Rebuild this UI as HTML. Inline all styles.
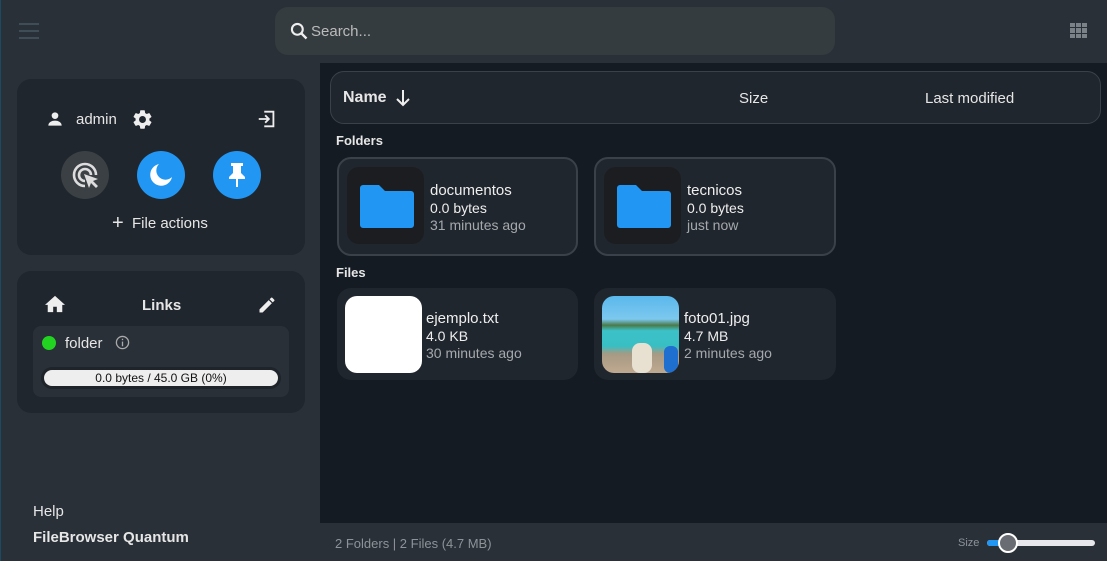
<!DOCTYPE html><html><head><style>
*{box-sizing:border-box;margin:0;padding:0}
body{width:1107px;height:561px;overflow:hidden;background:#293038;font-family:"Liberation Sans",sans-serif;color:#e6e6e6;position:relative}
.a{position:absolute}
.card{position:absolute;background:#20262d;border-radius:14px}
.fc{position:absolute;background:#20262d;border-radius:14px;border:2px solid #3b4148}
.ib{position:absolute;left:8px;top:8px;width:77px;height:77px;background:#1c1d20;border-radius:12px}
.t1{font-size:15px;color:#eee}.t2{font-size:14px;color:#eee}.t3{font-size:14px;color:#a5a9ad}
</style></head><body>
<div class="a" style="left:0;top:0;width:1px;height:561px;background:#1b4a66"></div>
<svg class="a" style="left:19px;top:22px" width="20" height="18"><rect y="1" width="20" height="2" fill="#3f4d57"/><rect y="8" width="20" height="2" fill="#3f4d57"/><rect y="15" width="20" height="2" fill="#3f4d57"/></svg>
<div class="a" style="left:275px;top:7px;width:560px;height:48px;background:#353c3f;border-radius:13px"></div>
<svg class="a" style="left:289px;top:21px" width="20" height="20" viewBox="0 0 24 24"><circle cx="10" cy="10" r="6.5" stroke="#eee" stroke-width="2.5" fill="none"/><path d="M15 15l6 6" stroke="#eee" stroke-width="2.8"/></svg>
<div class="a" style="left:311px;top:23px;font-size:15px;color:#bbb">Search...</div>
<svg class="a" style="left:1070px;top:23px" width="18" height="16"><g fill="#7b8288"><rect width="5" height="4"/><rect x="6" width="5" height="4"/><rect x="12" width="5" height="4"/><rect y="5" width="5" height="5"/><rect x="6" y="5" width="5" height="5"/><rect x="12" y="5" width="5" height="5"/><rect y="11" width="5" height="4"/><rect x="6" y="11" width="5" height="4"/><rect x="12" y="11" width="5" height="4"/></g></svg>

<div class="a" style="left:320px;top:63px;width:787px;height:460px;background:#151b22"></div>
<div class="a" style="left:330px;top:71px;width:771px;height:53px;background:#20262d;border:1px solid #3b4148;border-radius:14px"></div>
<div class="a" style="left:343px;top:89px;font-size:16px;font-weight:bold">Name</div>
<svg class="a" style="left:394px;top:88px" width="18" height="20" viewBox="0 0 18 20"><path d="M9 2v15M3 11l6 6 6-6" stroke="#eee" stroke-width="2" fill="none"/></svg>
<div class="a" style="left:739px;top:90px;font-size:15px">Size</div>
<div class="a" style="left:925px;top:90px;font-size:15px">Last modified</div>

<div class="a" style="left:336px;top:133px;font-size:13px;font-weight:bold">Folders</div>
<div class="a" style="left:336px;top:265px;font-size:13px;font-weight:bold">Files</div>

<div class="fc" style="left:337px;top:157px;width:241px;height:99px"><div class="ib"></div>
<svg class="a" style="left:20px;top:24px" width="56" height="46" viewBox="0 0 56 46"><path d="M4 2h16l6 6h26a3 3 0 013 3v31a3 3 0 01-3 3H4a3 3 0 01-3-3V5a3 3 0 013-3z" fill="#2196f3"/></svg>
<div class="a t1" style="left:91px;top:23px">documentos</div><div class="a t2" style="left:91px;top:41px">0.0 bytes</div><div class="a t3" style="left:91px;top:58px">31 minutes ago</div></div>
<div class="fc" style="left:594px;top:157px;width:242px;height:99px"><div class="ib"></div>
<svg class="a" style="left:20px;top:24px" width="56" height="46" viewBox="0 0 56 46"><path d="M4 2h16l6 6h26a3 3 0 013 3v31a3 3 0 01-3 3H4a3 3 0 01-3-3V5a3 3 0 013-3z" fill="#2196f3"/></svg>
<div class="a t1" style="left:91px;top:23px">tecnicos</div><div class="a t2" style="left:91px;top:41px">0.0 bytes</div><div class="a t3" style="left:91px;top:58px">just now</div></div>

<div class="card" style="left:337px;top:288px;width:241px;height:92px"><div class="a" style="left:8px;top:8px;width:77px;height:77px;background:#fff;border-radius:12px"></div>
<div class="a t1" style="left:89px;top:22px">ejemplo.txt</div><div class="a t2" style="left:89px;top:40px">4.0 KB</div><div class="a t3" style="left:89px;top:57px">30 minutes ago</div></div>
<div class="card" style="left:594px;top:288px;width:242px;height:92px"><div class="a" style="left:8px;top:8px;width:77px;height:77px;border-radius:12px;overflow:hidden;background:linear-gradient(#5ab8ec 0%,#7cc8ef 30%,#4a7a4a 38%,#3cc1c8 45%,#38bfc4 65%,#a69a84 75%,#c0a890 100%)">
<div class="a" style="left:30px;top:47px;width:20px;height:30px;background:#e8e0d0;border-radius:8px"></div><div class="a" style="left:62px;top:50px;width:14px;height:27px;background:#1e6fd0;border-radius:6px"></div></div>
<div class="a t1" style="left:90px;top:22px">foto01.jpg</div><div class="a t2" style="left:90px;top:40px">4.7 MB</div><div class="a t3" style="left:90px;top:57px">2 minutes ago</div></div>

<div class="a" style="left:320px;top:523px;width:787px;height:38px;background:#293038"></div>
<div class="a" style="left:335px;top:536px;font-size:13px;color:#8d9398">2 Folders | 2 Files (4.7 MB)</div>
<div class="a" style="left:958px;top:537px;font-size:11px;color:#8d9398">Size</div>
<div class="a" style="left:987px;top:540px;width:108px;height:6px;background:#e8e8ec;border-radius:3px"></div>
<div class="a" style="left:987px;top:540px;width:14px;height:6px;background:#2196f3;border-radius:3px"></div>
<div class="a" style="left:998px;top:533px;width:20px;height:20px;background:#6a6c74;border:2px solid #fff;border-radius:50%"></div>

<div class="card" style="left:17px;top:79px;width:288px;height:176px"></div>
<svg class="a" style="left:45px;top:109px" width="20" height="20" viewBox="0 0 24 24"><circle cx="12" cy="8" r="4" fill="#eee"/><path d="M4 20c0-4 4-6 8-6s8 2 8 6z" fill="#eee"/></svg>
<div class="a" style="left:76px;top:111px;font-size:15px">admin</div>
<svg class="a" style="left:131px;top:108px" width="23" height="23" viewBox="0 0 24 24"><path fill="#eee" d="M19.14 12.94c.04-.3.06-.61.06-.94s-.02-.64-.07-.94l2.03-1.58a.49.49 0 00.12-.61l-1.92-3.32a.49.49 0 00-.59-.22l-2.39.96a7 7 0 00-1.62-.94l-.36-2.54a.48.48 0 00-.48-.41h-3.84a.48.48 0 00-.47.41l-.36 2.54c-.59.24-1.13.57-1.62.94l-2.39-.96a.49.49 0 00-.59.22L2.74 8.87a.47.47 0 00.12.61l2.03 1.58c-.05.3-.09.63-.09.94s.02.64.07.94l-2.03 1.58a.49.49 0 00-.12.61l1.92 3.32c.12.22.37.29.59.22l2.39-.96c.5.38 1.03.7 1.62.94l.36 2.54c.05.24.24.41.48.41h3.84c.24 0 .44-.17.47-.41l.36-2.54c.59-.24 1.13-.56 1.62-.94l2.39.96c.22.08.47 0 .59-.22l1.92-3.32a.47.47 0 00-.12-.61zM12 15.6A3.6 3.6 0 1112 8.4a3.6 3.6 0 010 7.2z"/></svg>
<svg class="a" style="left:256px;top:108px" width="22" height="22" viewBox="0 0 24 24"><path fill="none" stroke="#eee" stroke-width="2" d="M9 4h10v16H9M3 12h11M10 8l4 4-4 4"/></svg>
<div class="a" style="left:61px;top:151px;width:48px;height:48px;border-radius:50%;background:#3b4045"></div>
<svg class="a" style="left:71px;top:161px" width="30" height="30" viewBox="0 0 30 30"><path d="M14 25a11 11 0 1111-11M14 20a6 6 0 116-6" stroke="#ddd" stroke-width="2.6" fill="none"/><path d="M13 13l14 5-5 2 5 5-2 2-5-5-2 5z" fill="#ddd"/></svg>
<div class="a" style="left:137px;top:151px;width:48px;height:48px;border-radius:50%;background:#2196f3"></div>
<svg class="a" style="left:148px;top:162px" width="26" height="26" viewBox="0 0 26 26"><path d="M11 2a11 11 0 1013 13A8 8 0 0111 2z" fill="#fff"/></svg>
<div class="a" style="left:213px;top:151px;width:48px;height:48px;border-radius:50%;background:#2196f3"></div>
<svg class="a" style="left:225px;top:162px" width="24" height="26" viewBox="0 0 24 26"><path d="M6 1h12v3h-2v7l4 4v2H4v-2l4-4V4H6z M11 17h2v8h-2z" fill="#fff"/></svg>
<div class="a" style="left:112px;top:212px;font-size:20px;line-height:22px">+</div>
<div class="a" style="left:132px;top:215px;font-size:15px">File actions</div>

<div class="card" style="left:17px;top:271px;width:288px;height:142px"></div>
<svg class="a" style="left:44px;top:294px" width="22" height="20" viewBox="0 0 24 22"><path d="M12 2L1 12h3v8h6v-6h4v6h6v-8h3z" fill="#eee"/></svg>
<div class="a" style="left:142px;top:297px;font-size:15px;font-weight:bold">Links</div>
<svg class="a" style="left:257px;top:295px" width="20" height="20" viewBox="0 0 24 24"><path d="M3 17.25V21h3.75L17.81 9.94l-3.75-3.75zM20.71 7.04a1 1 0 000-1.41l-2.34-2.34a1 1 0 00-1.41 0l-1.83 1.83 3.75 3.75z" fill="#eee"/></svg>
<div class="a" style="left:33px;top:326px;width:256px;height:71px;background:#293038;border-radius:8px"></div>
<div class="a" style="left:42px;top:336px;width:14px;height:14px;border-radius:50%;background:#22d322"></div>
<div class="a" style="left:65px;top:335px;font-size:15px">folder</div>
<svg class="a" style="left:115px;top:335px" width="15" height="15" viewBox="0 0 16 16"><circle cx="8" cy="8" r="6.5" stroke="#aaa" stroke-width="1.4" fill="none"/><rect x="7.3" y="7" width="1.4" height="5" fill="#aaa"/><rect x="7.3" y="4" width="1.4" height="1.5" fill="#aaa"/></svg>
<div class="a" style="left:41px;top:367px;width:240px;height:22px;background:#1e2429;border-radius:11px"></div>
<div class="a" style="left:44px;top:370px;width:234px;height:16px;background:#eee;border-radius:8px;color:#111;font-size:12px;text-align:center;line-height:16px">0.0 bytes / 45.0 GB (0%)</div>

<div class="a" style="left:33px;top:503px;font-size:15px">Help</div>
<div class="a" style="left:33px;top:529px;font-size:15px;font-weight:bold">FileBrowser Quantum</div>
</body></html>
